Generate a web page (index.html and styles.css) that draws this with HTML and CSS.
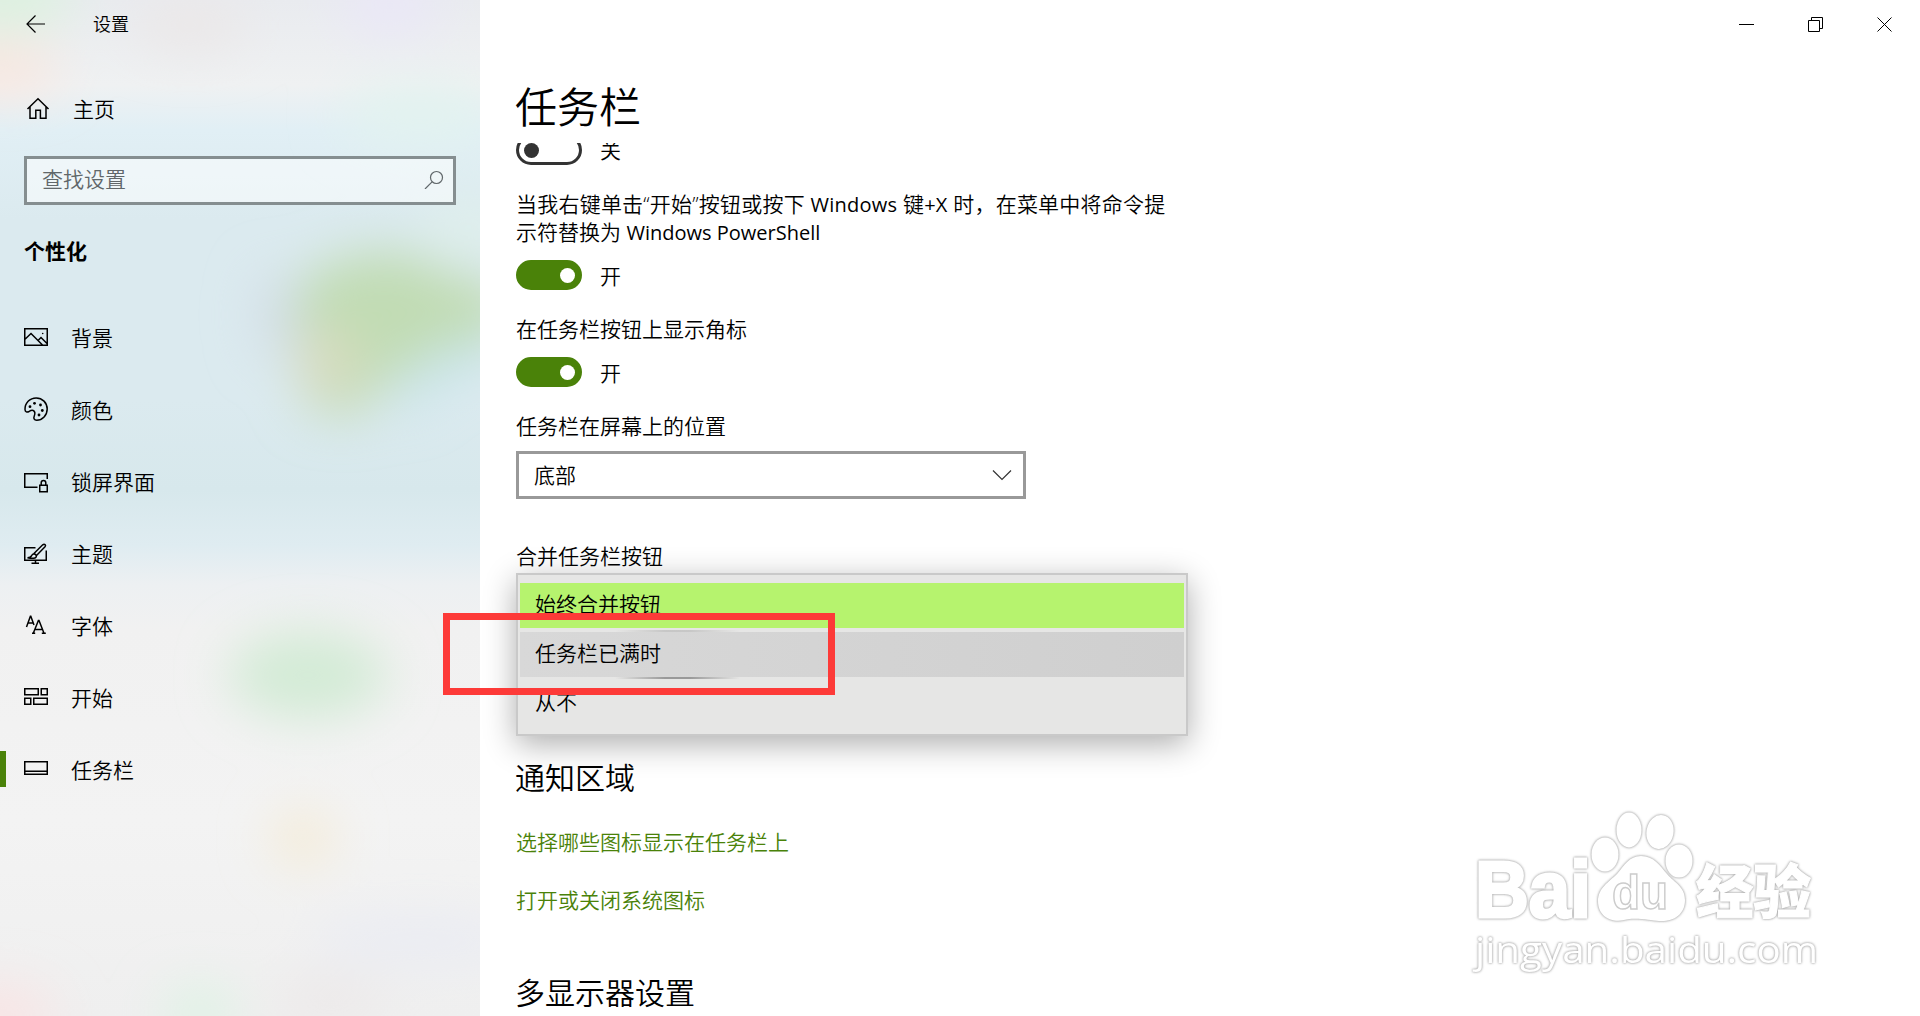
FILE: index.html
```html
<!DOCTYPE html>
<html lang="zh-CN">
<head>
    <meta charset="UTF-8">
    <meta name="viewport" content="width=device-width, initial-scale=1.0">
    <title>设置</title>
    <link rel="stylesheet" href="styles.css">
</head>
<body>

    <aside class="sidebar">
        <!-- acrylic colour spots -->
        <svg class="acrylic" width="480" height="1016" viewBox="0 0 480 1016">
            <defs>
                <filter id="soft" x="-50%" y="-50%" width="200%" height="200%"><feGaussianBlur stdDeviation="25"/></filter>
            </defs>
            <g filter="url(#soft)">
                <ellipse cx="5" cy="-5" rx="70" ry="35" fill="#dcf2df"/>
                <ellipse cx="0" cy="68" rx="60" ry="26" fill="#f9e6de"/>
                <ellipse cx="390" cy="5" rx="50" ry="30" fill="#eae7f8"/>
                <ellipse cx="190" cy="25" rx="60" ry="25" fill="#ebe7e7"/>
                <ellipse cx="420" cy="115" rx="80" ry="30" fill="#e2f3ef"/>
                <ellipse cx="470" cy="225" rx="50" ry="25" fill="#e0f0ec"/>
                <ellipse cx="275" cy="315" rx="18" ry="45" fill="#d3dde6"/>
                <path d="M298 282l42-24 60-8 50 22 60 20v36l-70 20-50 32-35 38-45-8-14-35z" fill="#c1dcb4"/>
                <ellipse cx="328" cy="362" rx="32" ry="36" fill="#d8dcc0"/>
                <path d="M395 395l50-40 50-18v20l-50 22-45 35z" fill="#bfe2e6"/>
                <ellipse cx="308" cy="675" rx="80" ry="44" fill="#d3ebd6"/>
                <ellipse cx="303" cy="838" rx="32" ry="28" fill="#f4ebd6"/>
                <ellipse cx="-5" cy="1015" rx="60" ry="30" fill="#f9e4e4"/>
                <ellipse cx="200" cy="1012" rx="38" ry="24" fill="#dcf3e3"/>
                <ellipse cx="420" cy="940" rx="110" ry="22" fill="#e9ebf3"/>
                <ellipse cx="330" cy="1000" rx="60" ry="20" fill="#ece8e8"/>
            </g>
        </svg>

        <div class="titlebar">
            <svg class="back" width="20" height="20" viewBox="0 0 20 20"><path d="M9.5 1.5L1 10l8.500 8.500M1 10h18"/></svg>
            <span class="app-name">设置</span>
        </div>

        <a class="home">
            <svg width="24" height="24" viewBox="0 0 24 24"><path d="M1.500 12L12 1.800 22.500 12M4 10v11.200h5.800v-8h4.600v8H20V10"/></svg>
            <span>主页</span>
        </a>

        <div class="search">
            <span>查找设置</span>
            <svg width="20" height="20" viewBox="0 0 20 20"><circle cx="12.500" cy="8.500" r="6"/><path d="M8.300 12.700L1 20"/></svg>
        </div>

        <h2 class="group">个性化</h2>

        <nav class="menu">
            <a class="item">
                <svg width="24" height="24" viewBox="0 0 24 24"><path d="M.75 3.750h22.500v16.500H.75zM.75 14.500L7 8.500l11.500 11.500M14 15.500l3-3 6 6"/><circle class="dot" cx="18.700" cy="8.500" r=".8"/></svg>
                <span>背景</span>
            </a>
            <a class="item">
                <svg width="24" height="24" viewBox="0 0 24 24"><path d="M1 12.500C.8 6 5.800.9 12.200.9 18.300.9 23.200 5.800 23.200 12S18.400 23.200 12.700 23.200c-2.800 0-3.300-2-2.500-4 .9-2.300 1.300-4.700-1-5.700-1.700-.7-2.800.1-4.200 1-1.900 1.100-3.900.5-4-2z"/><g class="dot"><circle cx="6" cy="9.700" r="1.400"/><circle cx="10.500" cy="6.300" r="1.400"/><circle cx="16.500" cy="8" r="1.400"/><circle cx="18.300" cy="13.500" r="1.400"/><circle cx="15" cy="18" r="1.400"/></g></svg>
                <span>颜色</span>
            </a>
            <a class="item">
                <svg width="24" height="24" viewBox="0 0 24 24"><path d="M13.500 18.250H.75V4.750h22.500V10M15.750 16.250h7.500v6.500h-7.500zM17.200 16.250v-2.500a2.300 2.300 0 0 1 4.600 0v2.500"/></svg>
                <span>锁屏界面</span>
            </a>
            <a class="item">
                <svg width="24" height="24" viewBox="0 0 24 24"><path d="M11.500 6.750H.75v12.500h21.500V9.500M11.500 19.250v3M7.500 22.250h7.500M3.500 16.700c2.500 0 3.500-.7 4.200-2.200.9-1.900 3.300-2 4.300-.5 1 1.700-.2 3.300-2.500 3.300-1.800 0-3.700 0-6-.6zM9.700 12.700L18.700 3.800c1.800-1.500 3.700.2 2.300 2L12.500 14.500"/></svg>
                <span>主题</span>
            </a>
            <a class="item">
                <svg width="24" height="24" viewBox="0 0 24 24"><path d="M2.500 14L6.400 3.200h.4L10 12M3.900 10h5.300M9.300 20.300L14.400 7.500h.6l5 12.800M10.500 16.500h8M8 20.300h3.200M17.800 20.300h4"/></svg>
                <span>字体</span>
            </a>
            <a class="item">
                <svg width="24" height="24" viewBox="0 0 24 24"><path d="M.75 3.750h13.500v6H.75zM17.250 3.750h6v6h-6zM.75 13.250h6v6h-6zM9.750 13.250h13.500v6H9.750z"/></svg>
                <span>开始</span>
            </a>
            <a class="item active">
                <svg width="24" height="24" viewBox="0 0 24 24"><path d="M.75 4.750h22.500v12.500H.75zM.75 14.200h22.500"/></svg>
                <span>任务栏</span>
            </a>
        </nav>
    </aside>

    <main class="main">
        <div class="window-controls">
            <svg width="15" height="15" viewBox="0 0 15 15"><path d="M0 7.500h15"/></svg>
            <svg width="15" height="15" viewBox="0 0 15 15"><path d="M.5 3.500h11v11H.5zM3.500 3.500v-3h11v11h-3"/></svg>
            <svg width="15" height="15" viewBox="0 0 15 15"><path d="M.5.5l14 14M14.500.5l-14 14"/></svg>
        </div>

        <h1 class="page-title">任务栏</h1>

        <div class="scroll">
            <div class="toggle-row first">
                <span class="toggle"></span>
                <span>关</span>
            </div>

            <p class="label"><span class="wide">当我右键单击“开始”按钮或按下 <span class="latin">Windows</span> 键<span class="latin">+X</span> 时，在菜单中将命令提</span><br>示符替换为 <span class="latin">Windows PowerShell</span></p>
            <div class="toggle-row">
                <span class="toggle on"></span>
                <span class="state">开</span>
            </div>

            <p class="label">在任务栏按钮上显示角标</p>
            <div class="toggle-row">
                <span class="toggle on"></span>
                <span class="state">开</span>
            </div>

            <p class="label position">任务栏在屏幕上的位置</p>
            <div class="select">
                <span>底部</span>
                <svg width="20" height="12" viewBox="0 0 20 12"><path d="M1 1.500l9 9 9-9"/></svg>
            </div>

            <p class="label combine">合并任务栏按钮</p>
            <div class="options">
                <div class="option selected">始终合并按钮</div>
                <div class="option hover">任务栏已满时</div>
                <div class="option">从不</div>
            </div>

            <h2 class="section">通知区域</h2>
            <a class="link">选择哪些图标显示在任务栏上</a>
            <a class="link">打开或关闭系统图标</a>

            <h2 class="section displays">多显示器设置</h2>
        </div>
    </main>

    <div class="marker"></div>

    <svg class="watermark" width="370" height="180" viewBox="0 0 370 180">
        <g class="logo">
            <text class="bai" x="15" y="117" textLength="116" lengthAdjust="spacingAndGlyphs">Bai</text>
            <ellipse cx="145" cy="54.500" rx="13.500" ry="17"/>
            <ellipse cx="169" cy="30" rx="12.500" ry="17.500"/>
            <ellipse cx="200" cy="32" rx="13.500" ry="17" transform="rotate(10 200 32)"/>
            <ellipse cx="219" cy="61" rx="13.500" ry="16.500"/>
            <path d="M181 56c13 0 19 10 26 18 8 9 18 13 18 26 0 15-12 22-26 21-9-1-25-4-35-1-12 3-26-3-26-19 0-13 11-19 19-27 7-8 12-18 24-18z"/>
            <text class="du" x="152" y="109" textLength="56" lengthAdjust="spacingAndGlyphs">du</text>
            <text class="exp" x="236" y="113" textLength="115" lengthAdjust="spacingAndGlyphs">经验</text>
            <text class="url" x="15" y="163" textLength="343" lengthAdjust="spacingAndGlyphs">jingyan.baidu.com</text>
        </g>
    </svg>

</body>
</html>
```
FILE: styles.css
```css
* {
    box-sizing: border-box;
}

body {
    margin: 0;
    width: 1920px;
    height: 1016px;
    display: flex;
    position: relative;
    overflow: hidden;
    background-color: #fff;
    color: #000;
    font-family: "Open Sans", "Noto Sans CJK SC", sans-serif;
    font-size: 21px;
    font-weight: 350;
    line-height: 28px;
}

h1, h2, p {
    margin: 0;
}

svg {
    display: block;
    flex: none;
    fill: none;
    stroke: #000;
    stroke-width: 1.5;
}

svg .dot {
    fill: #000;
    stroke: none;
}

/* sidebar */

.sidebar {
    position: relative;
    z-index: 0;
    width: 480px;
    height: 1016px;
    background: linear-gradient(#e9ebef 0, #eff1f2 85px, #e1eff5 130px, #dbeaef 220px, #dbeaef 400px, #d7e8ec 490px, #dfecf1 545px, #edf0f2 585px, #f1f1f1 630px, #f3f3f3 820px, #efefef 1016px);
}

.acrylic {
    position: absolute;
    left: 0;
    top: 0;
    z-index: -1;
    stroke: none;
}

.titlebar {
    height: 48px;
    padding-left: 26px;
    display: flex;
    align-items: center;
}

.back {
    stroke-width: 1.2;
}

.app-name {
    margin-left: 47px;
    font-size: 18px;
}

.home {
    height: 48px;
    margin-top: 37px;
    padding-left: 26px;
    display: flex;
    align-items: center;
}

.home span {
    margin-left: 23px;
}

.search {
    width: 432px;
    height: 49px;
    margin: 23px 0 0 24px;
    padding: 0 9px 3px 15px;
    display: flex;
    align-items: center;
    justify-content: space-between;
    border: 3px solid #858e90;
    background-color: rgba(255, 255, 255, 0.5);
    color: #60676a;
}

.search svg {
    stroke: #60676a;
    stroke-width: 1.2;
}

.group {
    margin: 32px 0 0 24px;
    font-size: 21px;
    font-weight: 700;
}

.menu {
    margin-top: 36px;
}

.item {
    height: 72px;
    padding-left: 24px;
    display: flex;
    align-items: center;
}

.item span {
    margin-left: 23px;
    padding-top: 2px;
}

.item.active::before {
    content: "";
    width: 6px;
    height: 36px;
    margin: 0 18px 0 -24px;
    background-color: #4a8209;
}

/* main */

.main {
    flex: 1;
    height: 1016px;
    display: flex;
    flex-direction: column;
}

.window-controls {
    height: 48px;
    padding: 1px 28px 0 0;
    display: flex;
    align-items: center;
    justify-content: flex-end;
    gap: 54px;
}

.window-controls svg {
    stroke-width: 1;
}

.page-title {
    height: 60px;
    margin: 31px 0 4px 35px;
    font-size: 42px;
    font-weight: 350;
    line-height: 56px;
}

.scroll {
    flex: 1;
    min-height: 0;
    padding-left: 36px;
    overflow: hidden;
}

.toggle-row {
    height: 30px;
    display: flex;
    align-items: center;
    gap: 18px;
}

.toggle-row.first {
    margin-top: -8px;
}

.toggle {
    width: 66px;
    height: 30px;
    display: flex;
    align-items: center;
    padding: 0 5px;
    border: 3px solid #333;
    border-radius: 15px;
}

.toggle::before {
    content: "";
    width: 15px;
    height: 15px;
    border-radius: 50%;
    background-color: #333;
}

.toggle.on {
    justify-content: flex-end;
    padding-right: 4px;
    border-color: #4a8209;
    background-color: #4a8209;
}

.toggle.on::before {
    background-color: #fff;
}

.state {
    padding-top: 2px;
}

.label {
    margin: 25px 0 14px;
}

.wide {
    letter-spacing: 0.22px;
}

.latin {
    font-size: 20px;
    font-weight: 400;
    line-height: 20px;
}

.label.position {
    margin-bottom: 11px;
}

.select {
    width: 510px;
    height: 48px;
    padding: 0 11px 0 15px;
    display: flex;
    align-items: center;
    justify-content: space-between;
    border: 3px solid #999;
}

.select svg {
    stroke: #333;
    stroke-width: 1.2;
}

.label.combine {
    margin: 43px 0 3px;
}

.options {
    width: 672px;
    height: 163px;
    padding: 8px 2px 0;
    border: 2px solid #c9c9c9;
    background-color: #e6e6e5;
    box-shadow: 0 8px 30px rgba(0, 0, 0, 0.32);
}

.option {
    height: 45px;
    margin-bottom: 4px;
    padding-left: 15px;
    line-height: 43px;
}

.option.selected {
    background-color: #b6f36e;
}

.option.hover {
    position: relative;
    background: linear-gradient(to right, #d8d8d8, #cfcfcf);
}

.option.hover::before,
.option.hover::after {
    content: "";
    position: absolute;
    left: 95px;
    width: 125px;
    height: 2px;
    background: linear-gradient(to right, transparent, #999 40%, #999 60%, transparent);
}

.option.hover::before {
    top: -2px;
    opacity: 0.4;
}

.option.hover::after {
    bottom: -2px;
}

.section {
    margin: 22px 0 0 -1px;
    font-size: 30px;
    font-weight: 350;
    line-height: 40px;
}

.link {
    display: block;
    margin-top: 30px;
    color: #4a8209;
}

.section.displays {
    margin-top: 59px;
}

.marker {
    position: absolute;
    left: 443px;
    top: 613px;
    width: 392px;
    height: 82px;
    border: 7px solid #fd3a38;
}

.watermark {
    position: absolute;
    left: 1460px;
    top: 800px;
}

.logo {
    fill: #fff;
    stroke: none;
    filter: drop-shadow(0 0 1px #aaa) drop-shadow(0 0 1px #ccc);
}

.bai,
.du {
    font-family: "Liberation Sans", Arial, sans-serif;
    font-weight: 700;
}

.bai {
    font-size: 79px;
    stroke: #fff;
    stroke-width: 3;
}

.du {
    font-size: 49px;
    stroke: #ccc;
    stroke-width: 1.5;
}

.exp {
    font-family: "Noto Sans CJK SC", sans-serif;
    font-size: 58px;
    font-weight: 900;
    stroke: #fff;
    stroke-width: 1;
}

.url {
    font-family: "Open Sans", sans-serif;
    font-size: 37px;
    font-weight: 400;
}
```
